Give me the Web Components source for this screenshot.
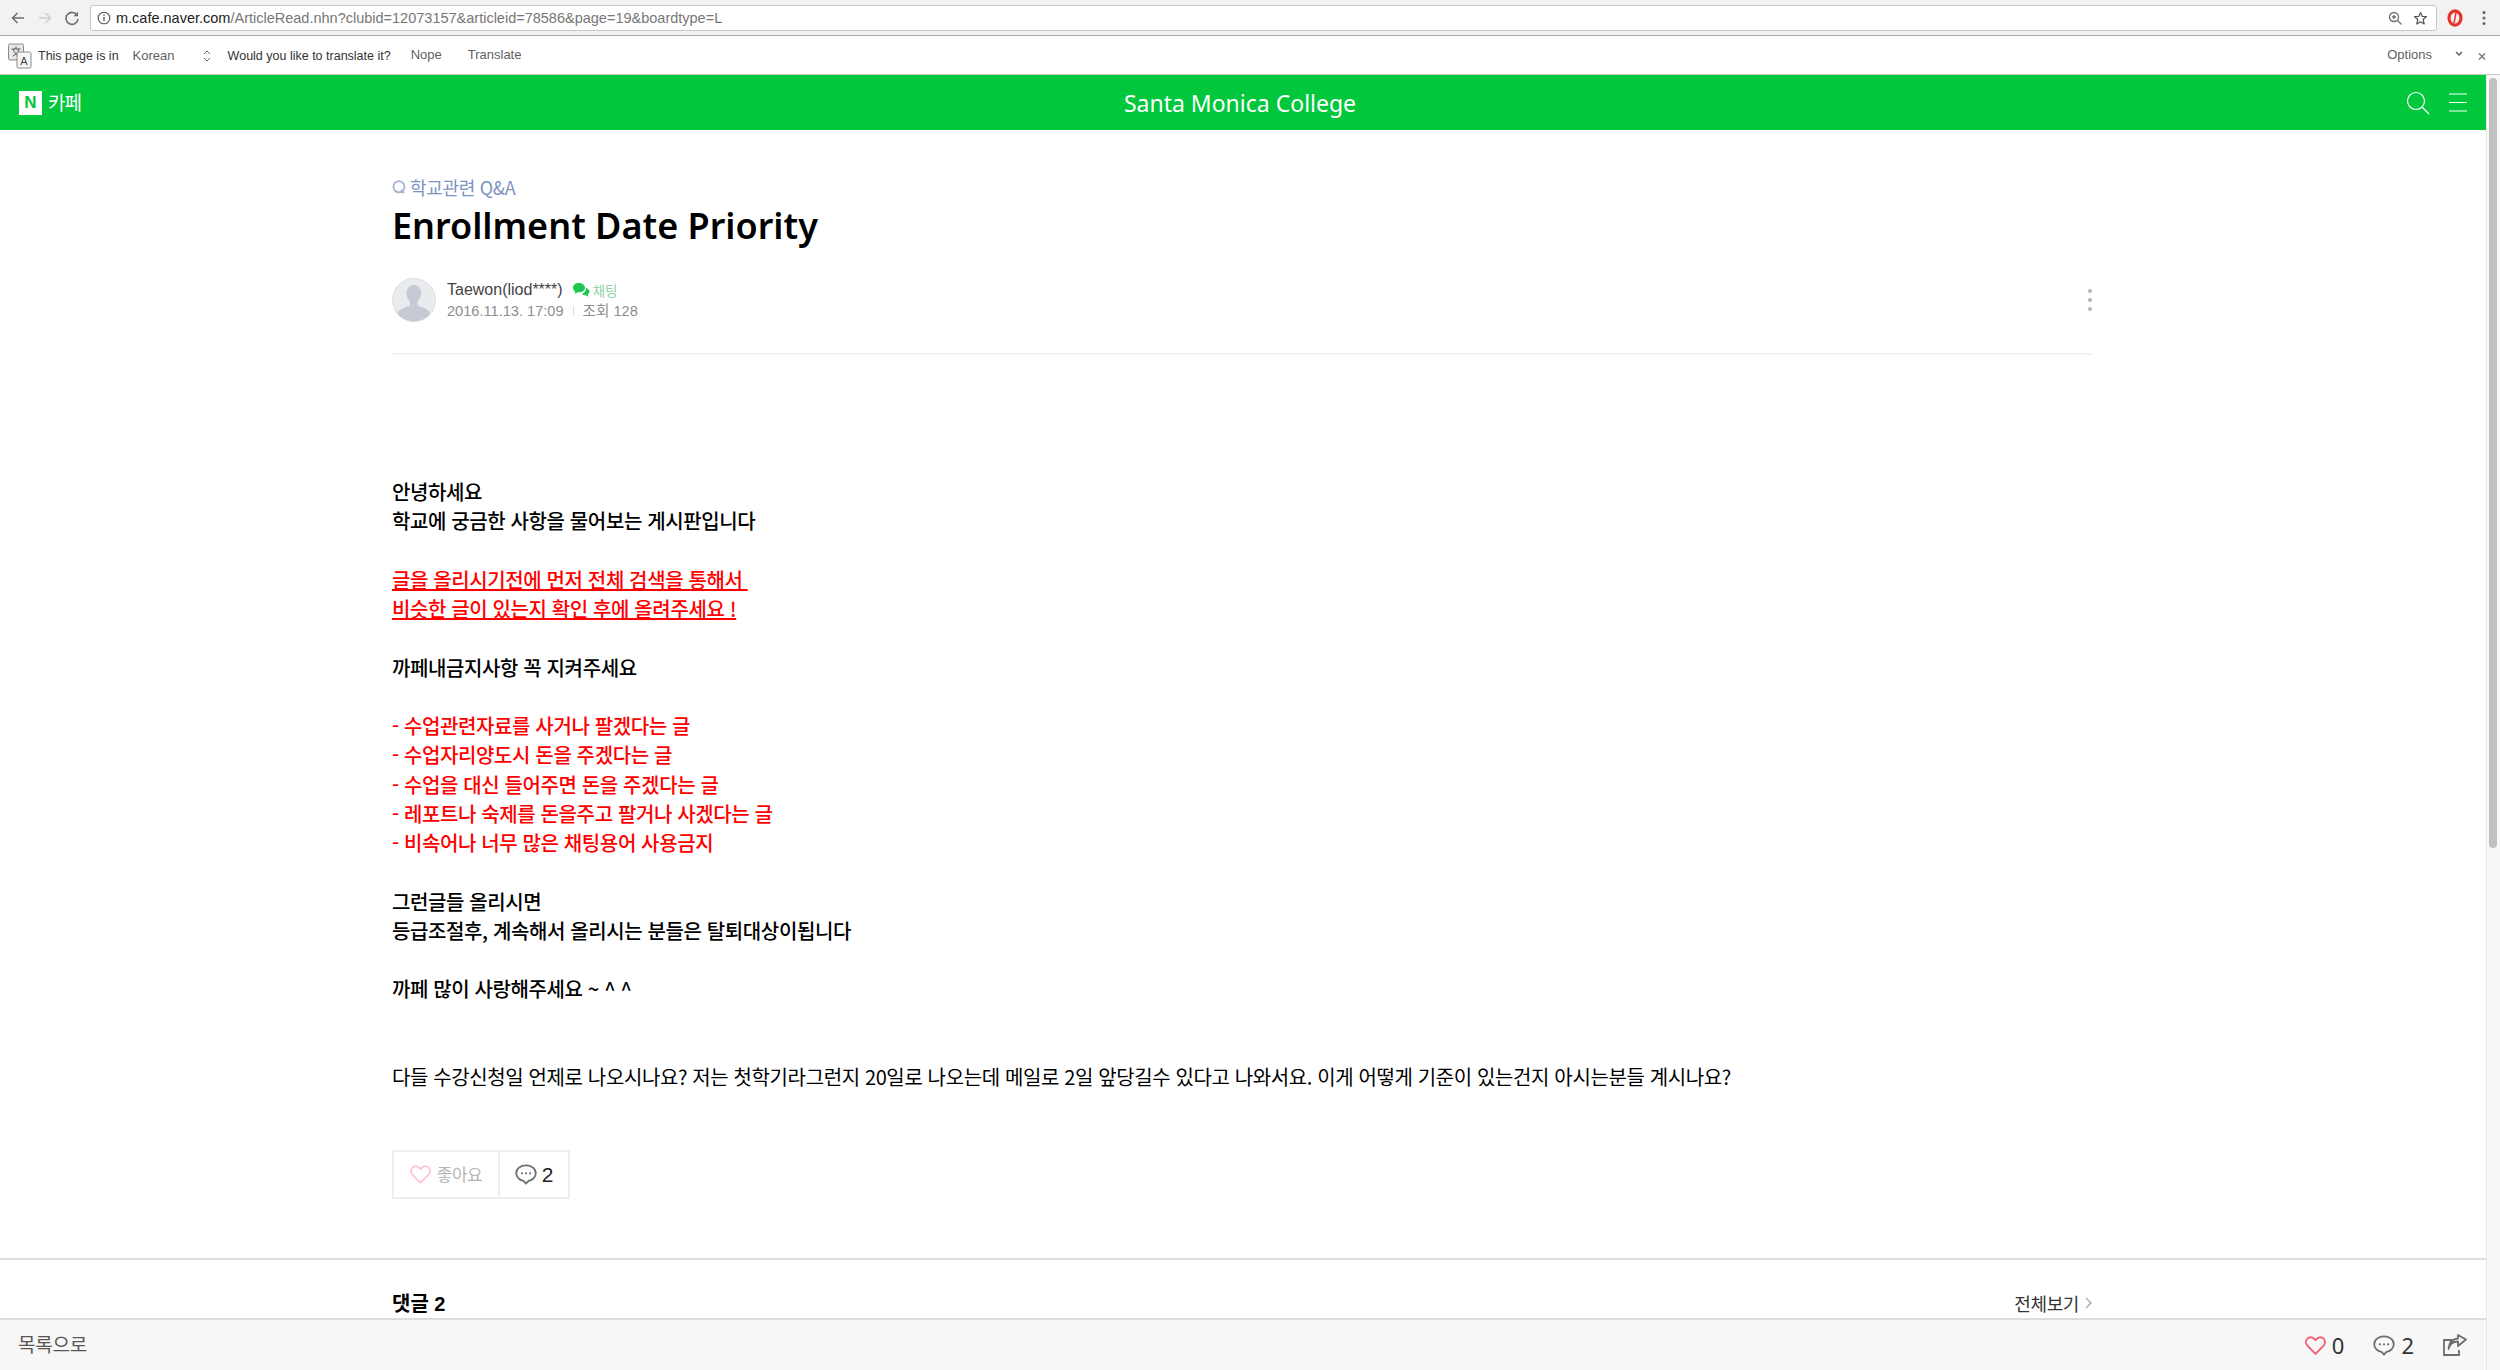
<!DOCTYPE html>
<html lang="ko"><head><meta charset="utf-8"><title>Enrollment Date Priority</title>
<style>
html,body{margin:0;height:100%;overflow:hidden;background:#fff}
body{font-family:"Liberation Sans","Noto Sans CJK KR",sans-serif;display:flex;flex-direction:column;height:1370px}
</style></head><body>
<browser-toolbar url-host="m.cafe.naver.com" url-path="/ArticleRead.nhn?clubid=12073157&amp;articleid=78586&amp;page=19&amp;boardtype=L"></browser-toolbar>
<translate-bar></translate-bar>
<page-shell>
  <cafe-header title="Santa Monica College"></cafe-header>
  <article-view>
    <article-head slot="head" board="학교관련 Q&amp;A" title="Enrollment Date Priority" author="Taewon(liod****)" date="2016.11.13. 17:09" views="조회 128"></article-head>
    <article-body slot="body">
      <b>안녕하세요</b>
      <b>학교에 궁금한 사항을 물어보는 게시판입니다</b>
      <br>
      <b class="alert"><u>글을 올리시기전에 먼저 전체 검색을 통해서&nbsp;</u></b>
      <b class="alert"><u>비슷한 글이 있는지 확인 후에 올려주세요 !</u></b>
      <br>
      <b>까페내금지사항 꼭 지켜주세요</b>
      <br>
      <b class="alert">- 수업관련자료를 사거나 팔겠다는 글</b>
      <b class="alert">- 수업자리양도시 돈을 주겠다는 글</b>
      <b class="alert">- 수업을 대신 들어주면 돈을 주겠다는 글</b>
      <b class="alert">- 레포트나 숙제를 돈을주고 팔거나 사겠다는 글</b>
      <b class="alert">- 비속어나 너무 많은 채팅용어 사용금지</b>
      <br>
      <b>그런글들 올리시면</b>
      <b>등급조절후, 계속해서 올리시는 분들은 탈퇴대상이됩니다</b>
      <br>
      <b>까페 많이 사랑해주세요 ~ ^ ^</b>
      <br><br>
      <span>다들 수강신청일 언제로 나오시나요? 저는 첫학기라그런지 20일로 나오는데 메일로 2일 앞당길수 있다고 나와서요. 이게 어떻게 기준이 있는건지 아시는분들 계시나요?</span>
    </article-body>
    <reaction-box slot="reactions"></reaction-box>
    <comment-head slot="comments"></comment-head>
  </article-view>
  <bottom-bar></bottom-bar>
</page-shell>
<script>
function def(name, html){
  customElements.define(name, class extends HTMLElement{
    constructor(){super();this.attachShadow({mode:"open"})}
    connectedCallback(){
      this.shadowRoot.innerHTML=html.replace(/\{\{(.*?)\}\}/g,(m,k)=>(this.getAttribute(k)||"").replace(/&/g,"&amp;"));
    }
  });
}
const heart=(c,w=2.2)=>`<svg width="21" height="19" viewBox="0 0 26 24" fill="none" stroke="${c}" stroke-width="${w}" stroke-linejoin="round"><path d="M13 22.500 3 12.500C.2 9.600.3 5.600 2.800 3.200 5.600.7 10 1.200 13 5.200c3-4 7.400-4.500 10.200-2 2.500 2.400 2.600 6.400-.2 9.300z"/></svg>`;
const bubble=(c)=>`<svg width="22" height="21" viewBox="0 0 24 23" fill="none"><path d="M12 1.500C5.900 1.500 1.300 5.200 1.300 10s4.300 8 8 8.500L12 21.500l2.700-3c3.700-.5 8-3.700 8-8.500S18.100 1.500 12 1.500z" stroke="${c}" stroke-width="2" stroke-linejoin="round"/><circle cx="7.500" cy="10.200" r="1.200" fill="${c}"/><circle cx="12" cy="10.200" r="1.200" fill="${c}"/><circle cx="16.500" cy="10.200" r="1.200" fill="${c}"/></svg>`;

def("browser-toolbar",`<style>
:host{display:flex;align-items:center;height:35px;background:#f2f2f2;border-bottom:1px solid #a9a9a9;padding:0 0 0 10px;flex:none}
.nav{display:flex;align-items:center;gap:11px;width:80px;flex:none}
.url{flex:1;height:26px;margin-top:1px;background:#fff;border:1px solid #c6c6c6;border-radius:3px;display:flex;align-items:center;padding:0 8px 0 6px;box-sizing:border-box;font:14.500px "Liberation Sans",sans-serif;color:#777;min-width:0}
.url b{font-weight:400;color:#222}
.info{margin-right:5px;flex:none}
.right{margin-left:auto;display:flex;gap:10px;align-items:center}
.ext{display:flex;align-items:center;gap:19px;width:63px;padding-left:10px;box-sizing:border-box;flex:none}
</style>
<div class="nav">
<svg width="16" height="16" viewBox="0 0 16 16" fill="none" stroke="#6e6e6e" stroke-width="1.500"><path d="M14 8H2.500M7.500 3 2.500 8l5 5"/></svg>
<svg width="16" height="16" viewBox="0 0 16 16" fill="none" stroke="#cfcfcf" stroke-width="1.500"><path d="M2 8h11.500M8.500 3l5 5-5 5"/></svg>
<svg width="16" height="16" viewBox="0 0 16 16" fill="none" stroke="#6e6e6e" stroke-width="1.600"><path d="M13.300 5.500A6 6 0 1 0 14 9"/><path d="M14 1.800v4.500H9.500z" fill="#6e6e6e" stroke="none"/></svg>
</div>
<div class="url">
<svg class="info" width="14" height="14" viewBox="0 0 14 14" fill="none" stroke="#555" stroke-width="1.100"><circle cx="7" cy="7" r="5.800"/><path d="M7 6v4.300M7 3.500v1.300" stroke-width="1.300"/></svg>
<span><b>{{url-host}}</b>{{url-path}}</span>
<span class="right">
<svg width="15" height="15" viewBox="0 0 15 15" fill="none" stroke="#6e6e6e" stroke-width="1.300"><circle cx="6" cy="6" r="4.500"/><path d="m9.500 9.500 4 4M4 6h4M6 4v4"/></svg>
<svg width="15" height="15" viewBox="0 0 15 15" fill="none" stroke="#555" stroke-width="1.200" stroke-linejoin="round"><path d="m7.500 1.500 1.800 4h4.200l-3.300 3 1 4.500-3.700-2.300L3.800 13l1-4.500-3.300-3h4.200z"/></svg>
</span></div>
<div class="ext">
<svg width="16" height="18" viewBox="0 0 16 18"><ellipse cx="8" cy="9" rx="6" ry="7.200" fill="none" stroke="#e5332a" stroke-width="3.200"/><path d="M9 3.500 7 14" stroke="#e5332a" stroke-width="1.500"/></svg>
<svg width="4" height="16" viewBox="0 0 4 16" fill="#666"><circle cx="2" cy="2.500" r="1.500"/><circle cx="2" cy="8" r="1.500"/><circle cx="2" cy="13.500" r="1.500"/></svg>
</div>`);

def("translate-bar",`<style>
:host{display:flex;align-items:center;height:39px;background:#fff;border-bottom:1px solid #c8c8c8;padding:1px 0 0 8px;flex:none;font:12.500px "Liberation Sans",sans-serif;color:#333;box-sizing:border-box}
.btn{color:#5f5f5f;font-size:13px;margin-top:-2px}
.t{margin-top:1px}
.sel{display:flex;width:78px;justify-content:space-between;align-items:center;margin:0 17px 0 14px}
.sp{margin-left:auto;display:flex;align-items:center}
</style>
<svg width="26" height="26" viewBox="0 0 26 26" style="margin-right:4px"><rect x=".5" y="1" width="15" height="16" rx="1.500" fill="#e8e8e8" stroke="#888"/><path d="M3.500 6h9M8 3.500V6M5 6c1 3.500 3 5.500 6 7M11 6c-1 3.500-3 5.500-6 7" stroke="#555" fill="none"/><rect x="9" y="9" width="14" height="16" rx="1.500" fill="#f5f5f5" stroke="#888"/><text x="16" y="22" font-family="Liberation Sans" font-size="11" text-anchor="middle" fill="#444">A</text></svg>
<span class="t">This page is in</span>
<span class="sel btn">Korean<svg width="8" height="14" viewBox="0 0 8 14" fill="none" stroke="#666"><path d="m1 5 3-3 3 3M1 9l3 3 3-3"/></svg></span>
<span class="t">Would you like to translate it?</span>
<span class="btn" style="margin-left:20px">Nope</span>
<span class="btn" style="margin-left:26px">Translate</span>
<span class="sp"><span class="btn">Options</span>
<svg width="8" height="6" viewBox="0 0 8 6" fill="none" stroke="#555" stroke-width="1.300" style="margin:0 0 3px 23px"><path d="m1 1 3 3 3-3"/></svg>
<svg width="9" height="9" viewBox="0 0 9 9" fill="none" stroke="#777" stroke-width="1.300" style="margin:2px 13px 0 15px"><path d="m1 1.500 6 6M7 1.500l-6 6"/></svg></span>`);

def("page-shell",`<style>
:host{display:flex;flex-direction:column;flex:1;min-height:0;position:relative;padding-right:14px;overflow:hidden}
.sb{position:absolute;top:0;right:0;bottom:0;width:14px;background:#f8f8f8;border-left:1px solid #e8e8e8;box-sizing:border-box}
.th{position:absolute;top:3px;left:2px;width:8px;height:770px;border-radius:4px;background:#c1c1c1}
</style><slot></slot><div class="sb"><div class="th"></div></div>`);

def("cafe-header",`<style>
:host{display:flex;align-items:center;height:55px;background:#00c73c;flex:none;color:#fff;padding:0 19px;box-sizing:border-box}
.logo{display:flex;align-items:center;gap:6px;font:400 19px "Noto Sans CJK KR",sans-serif;width:200px;letter-spacing:-1px}
.logo span:last-child{margin-top:-2px}
.n{width:23px;height:24px;background:#fff;color:#00c73c;display:flex;align-items:center;justify-content:center;font:900 17px "Liberation Sans",sans-serif;letter-spacing:0}
h1{flex:1;margin:0;text-align:center;font:400 23px "Noto Sans",sans-serif}
.ic{display:flex;gap:19px;width:206px;justify-content:flex-end;align-items:center}
</style>
<div class="logo"><span class="n">N</span><span>카페</span></div><h1>{{title}}</h1>
<div class="ic"><svg width="24" height="24" viewBox="0 0 24 24" fill="none" stroke="#fff" stroke-width="1.200"><circle cx="10" cy="10" r="8.500"/><path d="m16 16 7 7"/></svg>
<svg width="18" height="19" viewBox="0 0 18 19" fill="none" stroke="#fff" stroke-width="1.200"><path d="M0 1h18M0 9.500h18M0 18h18"/></svg></div>`);

def("article-view",`<style>
:host{display:block;flex:1;min-height:0;overflow:hidden;background:#fff}
.w{width:1700px;margin:0 0 0 392px}
</style><div class="w"><slot name="head"></slot><slot name="body"></slot><slot name="reactions"></slot></div><slot name="comments"></slot>`);

def("article-head",`<style>
:host{display:block;padding:45px 0 31px;border-bottom:2px solid #f3f3f3}
.b{display:flex;align-items:center;gap:4px;font:18px/24px "Noto Sans CJK KR",sans-serif;color:#7d93bf;height:24px;letter-spacing:-.3px}
.q{flex:none}
h2{margin:3px 0 0;font:600 36px/48px "Noto Sans",sans-serif;color:#000}
.r{display:flex;align-items:center;margin-top:28px;height:44px}
.av{width:44px;height:44px;margin-right:11px;flex:none}
.n{font:16px/22px "Liberation Sans","Noto Sans CJK KR",sans-serif;color:#444;display:flex;align-items:center;gap:9px}
.c{color:#8fd4a4;font:13.500px "Noto Sans CJK KR",sans-serif;display:flex;gap:3px;align-items:center}
.m{font:14.600px/21px "Liberation Sans","Noto Sans CJK KR",sans-serif;color:#8e8e8e;display:flex;align-items:center;gap:9px}
.m i{width:1px;height:10px;background:#ddd}
.d{margin-left:auto;display:flex;flex-direction:column;gap:5px}
.d i{width:4px;height:4px;border-radius:50%;background:#b4b4b4}
</style>
<div class="b"><svg class="q" width="14" height="14" viewBox="0 0 14 14" fill="none" stroke="#a4b4d4" stroke-width="1.800"><circle cx="7" cy="6.800" r="5.600"/><path d="m9 10 3 3"/></svg>{{board}}</div><h2>{{title}}</h2>
<div class="r"><svg class="av" viewBox="0 0 44 44"><defs><clipPath id="cp"><circle cx="22" cy="22" r="21.500"/></clipPath></defs><circle cx="22" cy="22" r="21.500" fill="#e9ebef" stroke="#dcdfe4"/><g clip-path="url(#cp)" fill="#c6cad4"><path d="M22 7c4.500 0 7 3.500 7 8 0 3.500-1.500 7-3.500 9v3.500c4 2 13 3.500 13 9.500v8H5v-8c0-6 9-7.500 13-9.500V24c-2-2-3.500-5.500-3.500-9 0-4.500 3-8 7.500-8z"/></g></svg>
<div><div class="n"><span>{{author}}</span><span class="c"><svg width="18" height="16" viewBox="0 0 18 16"><path d="M7 1C3.500 1 1 3 1 5.800c0 1.600.9 3 2.300 3.900L3 12l2.700-1.700H7c3.500 0 6-2 6-4.500S10.500 1 7 1z" fill="#1ec74e"/><path d="M14 6c2 .5 3.500 2 3.500 3.700 0 1.200-.7 2.200-1.700 2.900l.2 2.100-2.300-1.400c-1.600 0-3-.5-4-1.400 2.800-.5 4.300-3 4.300-5.900z" fill="#1ec74e"/></svg>채팅</span></div>
<div class="m"><span>{{date}}</span><i></i><span>{{views}}</span></div></div>
<div class="d"><i></i><i></i><i></i></div></div>`);

def("article-body",`<style>
:host{display:block;margin-top:122px;font:20px/29.250px "Noto Sans CJK KR","Liberation Sans",sans-serif;color:#000;letter-spacing:-.38px}
::slotted(b),::slotted(span){display:block}
::slotted(b){font-weight:500}
::slotted(.alert){color:#f00}
::slotted(span){font-weight:400}
::slotted(br){display:block;content:"";height:29.250px}
</style><slot></slot>`);

def("reaction-box",`<style>
:host{display:inline-flex;margin-top:59px;height:49px;border:2px solid #eee;box-sizing:border-box;align-items:center}
div{display:flex;align-items:center;height:100%}
.l{width:106px;justify-content:center;gap:6px;border-right:2px solid #eee;font:17px "Noto Sans CJK KR",sans-serif;color:#b5b5b5;letter-spacing:-.5px;box-sizing:border-box}
.l span{margin-top:-3px}
.r{width:68px;justify-content:center;gap:5px;font:21px "Liberation Sans",sans-serif;color:#222}
</style><div class="l">${heart("#ffc4d2")}<span>좋아요</span></div><div class="r">${bubble("#707070")}<span>2</span></div>`);

def("comment-head",`<style>
:host{display:flex;margin-top:59px;border-top:2px solid #dedede;padding:32px 394px 0 392px;justify-content:space-between;align-items:flex-start;height:58px;box-sizing:border-box}
b{font:bold 20px/24px "Liberation Sans","Noto Sans CJK KR",sans-serif;color:#000}
span{font:18px/22px "Noto Sans CJK KR",sans-serif;color:#333;display:flex;align-items:center;gap:6px;letter-spacing:-.4px}
</style><b>댓글 2</b><span>전체보기<svg width="7" height="12" viewBox="0 0 7 12" fill="none" stroke="#aaa" stroke-width="1.400"><path d="m1 1 5 5-5 5"/></svg></span>`);

def("bottom-bar",`<style>
:host{display:flex;align-items:center;height:52px;background:#f7f7f7;border-top:2px solid #dcdcdc;box-sizing:border-box;flex:none;padding:0 19px 0 18px;justify-content:space-between}
.b{font:19px "Noto Sans CJK KR",sans-serif;color:#555;letter-spacing:-.2px;margin-top:-3px}
.g{display:flex;align-items:center;font:22px "Noto Sans",sans-serif;color:#333}
</style><span class="b">목록으로</span><div class="g">${heart("#f5566f")}<span style="margin:0 29px 0 6px">0</span>${bubble("#707070")}<span style="margin:0 29px 0 6px">2</span>
<svg width="24" height="22" viewBox="0 0 24 22" fill="none" stroke="#6e6e6e" stroke-width="1.800"><path d="M9 6H1v15h15v-5"/><path d="M5.500 15c1-5 4.500-7.500 9.500-7.500V12l8-6.500L15 1v3.500C9 5 6 9 5.500 15z" stroke-linejoin="round"/></svg></div>`);
</script>
</body></html>
